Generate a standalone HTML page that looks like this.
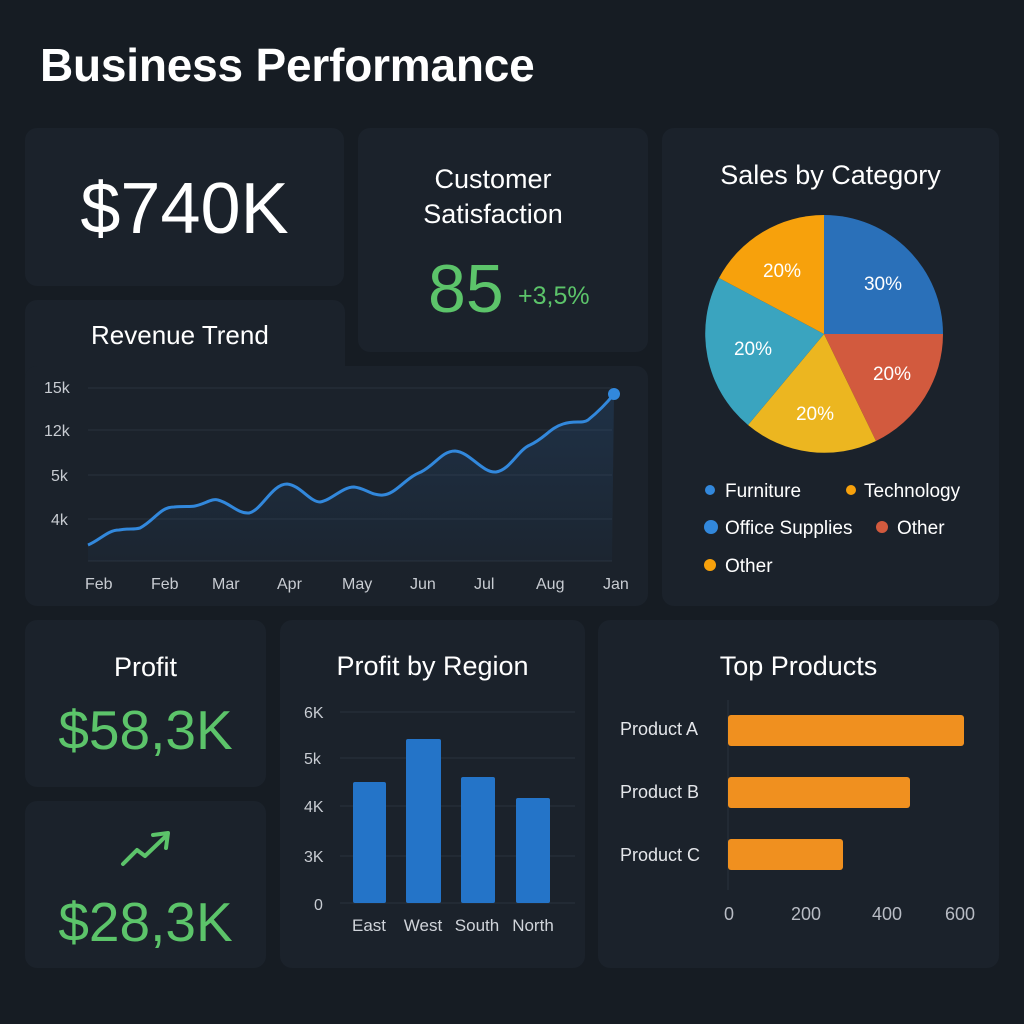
<!DOCTYPE html>
<html><head><meta charset="utf-8"><style>
*{margin:0;padding:0;box-sizing:border-box}
body{width:1024px;height:1024px;background:#161c23;font-family:"Liberation Sans",sans-serif;color:#fff;position:relative;overflow:hidden}
.c{position:absolute;background:#1b222b;border-radius:12px}
.t{position:absolute;white-space:nowrap}
.g{color:#5cc46a}
</style></head><body>
<div class="t" style="left:40px;top:38px;font-size:46px;font-weight:bold;letter-spacing:-0.2px">Business Performance</div>

<div class="c" style="left:25px;top:128px;width:319px;height:158px"></div>
<div class="t" style="left:25px;width:319px;text-align:center;top:168px;font-size:72px">$740K</div>

<div class="c" style="left:358px;top:128px;width:290px;height:224px"></div>
<div class="t" style="left:358px;width:270px;text-align:center;top:162px;font-size:27px;line-height:35px">Customer<br>Satisfaction</div>
<div class="t g" style="left:428px;top:250px;font-size:68px">85</div>
<div class="t g" style="left:518px;top:282px;font-size:25px">+3,5%</div>

<div class="c" style="left:25px;top:300px;width:320px;height:120px"></div>
<div class="c" style="left:25px;top:366px;width:623px;height:240px"></div>
<div class="t" style="left:91px;top:320px;font-size:26px">Revenue Trend</div>
<svg class="t" style="left:0;top:0" width="660" height="620">
<defs><linearGradient id="a" x1="0" y1="0" x2="0" y2="1"><stop offset="0" stop-color="#2a5f9a" stop-opacity="0.25"/><stop offset="1" stop-color="#2a5f9a" stop-opacity="0.05"/></linearGradient></defs>
<g stroke="#2a323c" stroke-width="1"><line x1="88" y1="388" x2="612" y2="388"/><line x1="88" y1="430" x2="612" y2="430"/><line x1="88" y1="475" x2="612" y2="475"/><line x1="88" y1="519" x2="612" y2="519"/><line x1="88" y1="561" x2="612" y2="561"/></g>
<path d="M88 545 C100 540 108 530 119 530 C130 528 133 530 140 528 C155 520 160 507 174 507 C185 506 190 507 195 506 C205 504 212 498 218 500 C230 503 238 514 249 513 C262 510 272 484 287 484 C300 485 310 502 320 502 C332 500 342 487 354 487 C365 488 372 496 383 495 C396 494 405 478 421 472 C435 465 442 451 455 451 C470 452 482 473 496 472 C510 470 518 450 530 445 C545 438 550 428 563 424 C575 420 582 424 588 420 C598 412 606 404 614 394 L612 561 L88 561 Z" fill="url(#a)"/>
<path d="M88 545 C100 540 108 530 119 530 C130 528 133 530 140 528 C155 520 160 507 174 507 C185 506 190 507 195 506 C205 504 212 498 218 500 C230 503 238 514 249 513 C262 510 272 484 287 484 C300 485 310 502 320 502 C332 500 342 487 354 487 C365 488 372 496 383 495 C396 494 405 478 421 472 C435 465 442 451 455 451 C470 452 482 473 496 472 C510 470 518 450 530 445 C545 438 550 428 563 424 C575 420 582 424 588 420 C598 412 606 404 614 394" fill="none" stroke="#3288dc" stroke-width="3"/>
<circle cx="614" cy="394" r="6" fill="#3288dc"/>
<g fill="#c8ccd2" font-size="16" font-family="Liberation Sans"><text x="44" y="393">15k</text><text x="44" y="436">12k</text><text x="51" y="481">5k</text><text x="51" y="525">4k</text>
<text x="85" y="589">Feb</text><text x="151" y="589">Feb</text><text x="212" y="589">Mar</text><text x="277" y="589">Apr</text><text x="342" y="589">May</text><text x="410" y="589">Jun</text><text x="474" y="589">Jul</text><text x="536" y="589">Aug</text><text x="603" y="589">Jan</text></g>
</svg>

<div class="c" style="left:662px;top:128px;width:337px;height:478px"></div>
<div class="t" style="left:662px;width:337px;text-align:center;top:160px;font-size:27px">Sales by Category</div>
<svg class="t" style="left:0;top:0" width="1024" height="620" font-family="Liberation Sans">
<path d="M824 334 L824 215 A119 119 0 0 1 943 334Z" fill="#2a70b9"/>
<path d="M824 334 L943 334 A119 119 0 0 1 876 441Z" fill="#d25a3e"/>
<path d="M824 334 L876 441 A119 119 0 0 1 748 425Z" fill="#ecb620"/>
<path d="M824 334 L748 425 A119 119 0 0 1 719 278Z" fill="#3aa4bf"/>
<path d="M824 334 L719 278 A119 119 0 0 1 824 215Z" fill="#f7a10c"/>
<g fill="#fff" font-size="19" text-anchor="middle"><text x="883" y="290">30%</text><text x="782" y="277">20%</text><text x="753" y="355">20%</text><text x="892" y="380">20%</text><text x="815" y="420">20%</text></g>
<circle cx="710" cy="490" r="5" fill="#3288dc"/><circle cx="851" cy="490" r="5" fill="#f7a10c"/>
<circle cx="711" cy="527" r="7" fill="#3288dc"/><circle cx="882" cy="527" r="6" fill="#d25a3e"/>
<circle cx="710" cy="565" r="6" fill="#f7a10c"/>
<g fill="#fff" font-size="19"><text x="725" y="497">Furniture</text><text x="864" y="497">Technology</text><text x="725" y="534">Office Supplies</text><text x="897" y="534">Other</text><text x="725" y="572">Other</text></g>
</svg>

<div class="c" style="left:25px;top:620px;width:241px;height:167px"></div>
<div class="t" style="left:25px;width:241px;text-align:center;top:652px;font-size:27px">Profit</div>
<div class="t g" style="left:25px;width:241px;text-align:center;top:698px;font-size:55px">$58,3K</div>

<div class="c" style="left:25px;top:801px;width:241px;height:167px"></div>
<svg class="t" style="left:120px;top:828px" width="55" height="42"><path d="M3 36 L17 22 L25 28 L45 9" fill="none" stroke="#5cc46a" stroke-width="4" stroke-linecap="round" stroke-linejoin="round"/><path d="M33 7 L48 5 L46 20" fill="none" stroke="#5cc46a" stroke-width="4" stroke-linecap="round" stroke-linejoin="round"/></svg>
<div class="t g" style="left:25px;width:241px;text-align:center;top:890px;font-size:55px">$28,3K</div>

<div class="c" style="left:280px;top:620px;width:305px;height:348px"></div>
<div class="t" style="left:280px;width:305px;text-align:center;top:651px;font-size:27px">Profit by Region</div>
<div class="c" style="left:598px;top:620px;width:401px;height:348px"></div>
<div class="t" style="left:598px;width:401px;text-align:center;top:651px;font-size:27px">Top Products</div>
<svg class="t" style="left:0;top:0" width="1024" height="1024" font-family="Liberation Sans">
<g stroke="#2a323c"><line x1="340" y1="712" x2="575" y2="712"/><line x1="340" y1="758" x2="575" y2="758"/><line x1="340" y1="806" x2="575" y2="806"/><line x1="340" y1="856" x2="575" y2="856"/><line x1="340" y1="903" x2="575" y2="903"/></g>
<g fill="#2474c8"><rect x="353" y="782" width="33" height="121" rx="2"/><rect x="406" y="739" width="35" height="164" rx="2"/><rect x="461" y="777" width="34" height="126" rx="2"/><rect x="516" y="798" width="34" height="105" rx="2"/></g>
<g fill="#c8ccd2" font-size="16"><text x="304" y="718">6K</text><text x="304" y="764">5k</text><text x="304" y="812">4K</text><text x="304" y="862">3K</text><text x="314" y="910">0</text></g>
<g fill="#d0d4da" font-size="17" text-anchor="middle"><text x="369" y="931">East</text><text x="423" y="931">West</text><text x="477" y="931">South</text><text x="533" y="931">North</text></g>
<line x1="728" y1="700" x2="728" y2="890" stroke="#2a323c"/>
<g fill="#f0901f"><rect x="728" y="715" width="236" height="31" rx="3"/><rect x="728" y="777" width="182" height="31" rx="3"/><rect x="728" y="839" width="115" height="31" rx="3"/></g>
<g fill="#e4e6ea" font-size="18"><text x="620" y="735">Product A</text><text x="620" y="798">Product B</text><text x="620" y="861">Product C</text></g>
<g fill="#b8bcc4" font-size="18" text-anchor="middle"><text x="729" y="920">0</text><text x="806" y="920">200</text><text x="887" y="920">400</text><text x="960" y="920">600</text></g>
</svg>
</body></html>
